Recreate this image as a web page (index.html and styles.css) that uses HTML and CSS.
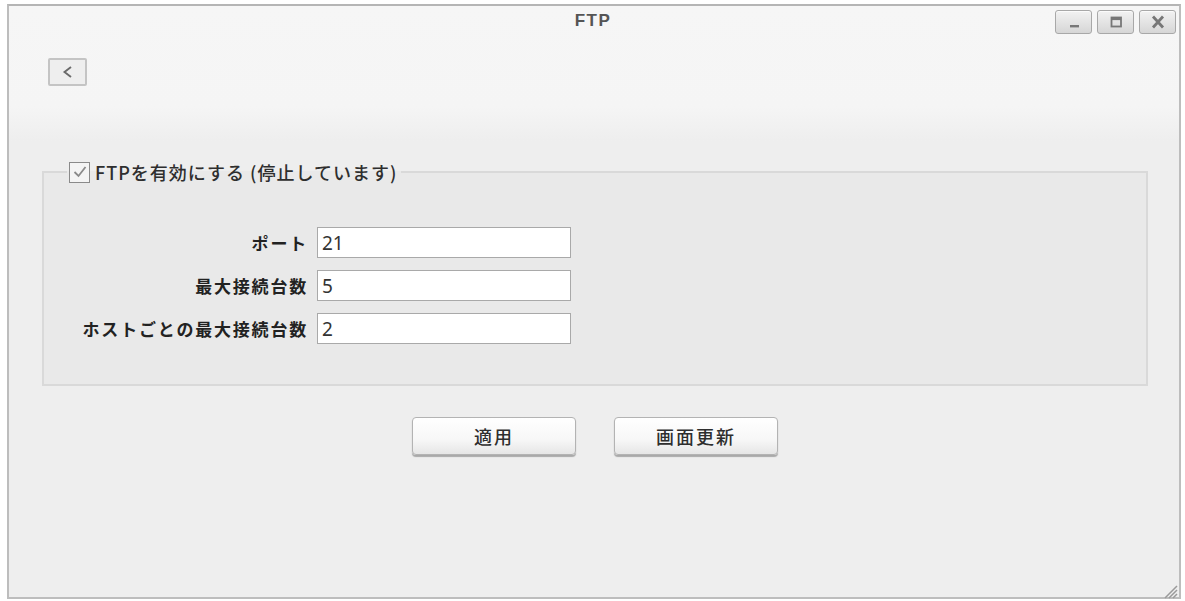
FILE: index.html
```html
<!DOCTYPE html>
<html lang="ja">
<head>
<meta charset="utf-8">
<title>FTP</title>
<link rel="stylesheet" href="styles.css">
</head>
<body>
<div class="window">
  <div class="titlebar">
    <div></div>
    <div class="title">FTP</div>
    <div class="controls">
      <span class="ctl"><svg width="18" height="14" viewBox="0 0 18 14"><rect x="5" y="10" width="9" height="2.4" fill="#777"/></svg></span>
      <span class="ctl"><svg width="18" height="14" viewBox="0 0 18 14"><rect x="4.5" y="2.5" width="9.5" height="9" fill="none" stroke="#777" stroke-width="1.8"/><rect x="4.5" y="2.5" width="9.5" height="2.6" fill="#777"/></svg></span>
      <span class="ctl"><svg width="18" height="14" viewBox="0 0 18 14"><path d="M4 1.5 L14 12.5 M14 1.5 L4 12.5" stroke="#777" stroke-width="2.8"/></svg></span>
    </div>
  </div>
  <div class="header">
    <span class="back"><svg width="14" height="16" viewBox="0 0 14 16"><path d="M10 3 L3.5 8 L10 13" fill="none" stroke="#6a6a6a" stroke-width="1.9"/></svg></span>
  </div>
  <fieldset class="group">
    <legend class="legend">
      <span class="checkbox"><svg width="16" height="16" viewBox="0 0 16 16"><path d="M2.5 8 L6.5 12 L13.5 3" fill="none" stroke="#8a8a8a" stroke-width="1.8"/></svg></span>
      <span class="legend-text">FTPを有効にする (停止しています)</span>
    </legend>
    <div class="form">
      <label class="lbl">ポート</label>
      <div class="field">21</div>
      <label class="lbl">最大接続台数</label>
      <div class="field">5</div>
      <label class="lbl">ホストごとの最大接続台数</label>
      <div class="field">2</div>
    </div>
  </fieldset>
  <div class="actions">
    <span class="btn">適用</span>
    <span class="btn">画面更新</span>
  </div>
  <span class="grip"><svg width="16" height="16" viewBox="0 0 16 16"><path d="M15 3 L3 15 M15 7 L7 15 M15 11 L11 15" stroke="#9a9a9a" stroke-width="1.5"/></svg></span>
</div>
</body>
</html>
```

FILE: styles.css
```css
html, body {
  margin: 0;
  padding: 0;
  background: #ffffff;
}

body {
  font-family: "Noto Sans CJK JP", "Noto Sans", sans-serif;
  color: #333;
}

.window {
  position: relative;
  box-sizing: border-box;
  width: 1174px;
  height: 595px;
  margin: 4px 0 0 7px;
  border: 2px solid #bdbdbd;
  border-top-color: #b5b5b5;
  background: linear-gradient(to bottom, #f6f6f6 0px, #f5f5f5 100px, #eeeeee 135px, #eeeeee 100%);
}

.titlebar {
  display: grid;
  grid-template-columns: 1fr auto 1fr;
  align-items: start;
  height: 36px;
}

.title {
  font-family: "Liberation Sans", Arial, sans-serif;
  font-weight: bold;
  font-size: 17px;
  color: #555;
  padding-top: 5px;
  letter-spacing: 1.5px;
  padding-right: 2px;
}

.controls {
  justify-self: end;
  display: flex;
  gap: 5px;
  padding: 4px 3px 0 0;
}

.ctl {
  box-sizing: border-box;
  width: 37px;
  height: 24px;
  border: 1px solid #a8a8a8;
  border-radius: 3px;
  background: linear-gradient(to bottom, #f2f2f2, #d6d6d6);
  display: flex;
  align-items: center;
  justify-content: center;
  box-shadow: inset 0 1px 0 #fbfbfb;
}

.header {
  height: 118px;
  padding: 16px 0 0 39px;
  box-sizing: border-box;
}

.back {
  box-sizing: border-box;
  display: flex;
  align-items: center;
  justify-content: center;
  width: 39px;
  height: 28px;
  border: 2px solid #c4c4c4;
  border-radius: 2px;
  background: #eeeeee;
}

.group {
  margin: 0 31px 0 33px;
  padding: 0 0 40px 0;
  border: 2px solid #d9d9d9;
  background: #e9e9e9;
  min-width: 0;
}

.legend {
  margin-left: 23px;
  padding: 0 4px 0 2px;
  display: flex;
  align-items: center;
  gap: 5px;
  height: 24px;
}

.checkbox {
  box-sizing: border-box;
  width: 21px;
  height: 21px;
  border: 1.5px solid #8a8a8a;
  background: #f4f4f4;
  display: flex;
  align-items: center;
  justify-content: center;
}

.legend-text {
  font-size: 18px;
  font-weight: 500;
  color: #2e2e2e;
  letter-spacing: 1px;
}

.form {
  display: grid;
  grid-template-columns: 264px 254px;
  column-gap: 9px;
  row-gap: 12px;
  padding-top: 43px;
  align-items: center;
}

.lbl {
  text-align: right;
  font-weight: bold;
  font-size: 17px;
  letter-spacing: 1.8px;
  color: #222;
  white-space: nowrap;
}

.field {
  box-sizing: border-box;
  height: 31px;
  border: 1.5px solid #a9a9a9;
  background: #ffffff;
  font-family: "Noto Sans", sans-serif;
  font-size: 19px;
  line-height: 30px;
  padding-left: 4px;
  color: #333;
}

.actions {
  display: flex;
  justify-content: center;
  gap: 38px;
  margin-top: 31px;
  padding-left: 2px;
}

.btn {
  box-sizing: border-box;
  width: 164px;
  height: 38px;
  border: 1px solid #b3b3b3;
  border-radius: 4px;
  background: linear-gradient(to bottom, #ffffff 0%, #f7f7f7 60%, #e6e6e6 100%);
  box-shadow: 0 2px 1px #a9a9a9;
  display: flex;
  align-items: center;
  justify-content: center;
  font-size: 18px;
  font-weight: 500;
  letter-spacing: 2px;
  color: #2e2e2e;
}

.grip {
  position: absolute;
  right: 1px;
  bottom: 1px;
  width: 16px;
  height: 16px;
}
```
